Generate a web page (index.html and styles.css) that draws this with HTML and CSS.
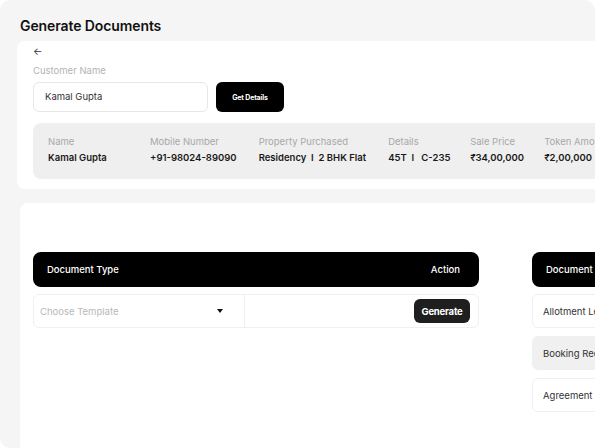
FILE: index.html
```html
<!DOCTYPE html>
<html>
<head>
<meta charset="utf-8">
<link rel="stylesheet" href="styles.css">
</head>
<body>
<div class="panel">
  <h1 class="title">Generate Documents</h1>
  <section class="card card-top">
    <div class="back">&larr;</div>
    <div class="label">Customer Name</div>
    <div class="search-row">
      <div class="input">Kamal Gupta</div>
      <button class="btn-details">Get Details</button>
    </div>
    <div class="info">
      <div class="col col-name"><span class="k">Name</span><span class="v">Kamal Gupta</span></div>
      <div class="col"><span class="k">Mobile Number</span><span class="v">+91-98024-89090</span></div>
      <div class="col"><span class="k">Property Purchased</span><span class="v">Residency &nbsp;I&nbsp; 2 BHK Flat</span></div>
      <div class="col col-details"><span class="k">Details</span><span class="v">45T &nbsp;I&nbsp;&nbsp; C-235</span></div>
      <div class="col col-sale"><span class="k">Sale Price</span><span class="v">₹34,00,000</span></div>
      <div class="col"><span class="k">Token Amount</span><span class="v">₹2,00,000</span></div>
    </div>
  </section>
  <section class="card card-bottom">
    <div class="tables">
      <div class="table t1">
        <div class="thead"><span>Document Type</span><span>Action</span></div>
        <div class="row row-split">
          <div class="cell-select"><span class="ph">Choose Template</span><span class="caret"></span></div>
          <div class="cell-action"><button class="btn-gen">Generate</button></div>
        </div>
      </div>
      <div class="table t2">
        <div class="thead"><span>Document Name</span><span>Action</span></div>
        <div class="row">Allotment Letter</div>
        <div class="row row-gray">Booking Receipt</div>
        <div class="row">Agreement to Sale</div>
      </div>
    </div>
  </section>
</div>
</body>
</html>
```
FILE: styles.css
```css
* { box-sizing: border-box; }
html, body { margin: 0; padding: 0; background: #fff; }
body {
  width: 595px;
  height: 448px;
  overflow: hidden;
  font-family: Inter, "Noto Sans", sans-serif;
  color: #1a1a1a;
}
.panel {
  width: 595px;
  height: 448px;
  background: #f5f5f5;
  border-radius: 11px;
  overflow: hidden;
  padding: 17px 0 0 17px;
}
.title {
  margin: 0 0 0 3px;
  font-size: 14px;
  font-weight: 600;
  line-height: 18px;
  color: #111;
  letter-spacing: -0.1px;
}
.card {
  background: #fff;
  border-radius: 8px;
  width: 640px;
}
.card-top {
  margin-top: 6px;
  height: 148px;
  padding: 3px 0 0 16px;
}
.back {
  font-size: 10px;
  line-height: 14px;
  color: #333;
}
.label {
  margin-top: 6px;
  font-size: 9.5px;
  line-height: 13px;
  color: #b3b3b3;
}
.search-row {
  display: flex;
  gap: 8px;
  margin-top: 5px;
}
.input {
  width: 175px;
  height: 30px;
  border: 1px solid #e6e6e6;
  border-radius: 6px;
  padding: 0 11px;
  font-size: 9.5px;
  line-height: 28px;
  color: #333;
}
.btn-details {
  width: 68px;
  height: 30px;
  background: #000;
  color: #fff;
  border: none;
  border-radius: 6px;
  font-family: inherit;
  font-size: 7px;
  font-weight: 700;
  letter-spacing: -0.15px;
  padding: 0;
}
.info {
  margin-top: 11px;
  height: 56px;
  background: #efefef;
  border-radius: 8px;
  display: flex;
  gap: 22px;
  padding: 12px 0 0 15px;
}
.col {
  display: flex;
  flex-direction: column;
  gap: 3px;
  white-space: nowrap;
  flex-shrink: 0;
}
.col-name { width: 80px; }
.col-details { width: 60px; }
.col-sale { width: 52px; }
.k {
  font-size: 9.5px;
  line-height: 13px;
  color: #a8a8a8;
}
.v {
  font-size: 9.5px;
  line-height: 13px;
  font-weight: 600;
  color: #1a1a1a;
}
.card-bottom {
  margin: 14px 0 0 3px;
  height: 260px;
  padding: 49px 0 0 13px;
}
.tables {
  display: flex;
  gap: 53px;
}
.table {
  width: 446px;
  flex-shrink: 0;
  display: flex;
  flex-direction: column;
  gap: 8px;
}
.thead {
  height: 35px;
  margin-bottom: -1px;
  background: #000;
  border-radius: 8px;
  color: #fff;
  display: flex;
  align-items: center;
  justify-content: space-between;
  padding: 0 19px 0 14px;
  font-size: 9.5px;
  font-weight: 500;
}
.row {
  height: 34px;
  border: 1px solid #efefef;
  border-radius: 6px;
  display: flex;
  align-items: center;
  padding: 0 10px;
  font-size: 9.5px;
  color: #333;
}
.row-gray {
  background: #f0f0f0;
  border-color: #f0f0f0;
}
.row-split {
  padding: 0;
}
.cell-select {
  width: 211px;
  height: 100%;
  border-right: 1px solid #efefef;
  display: flex;
  align-items: center;
  justify-content: space-between;
  padding: 0 21px 0 6px;
}
.ph {
  color: #b8b8b8;
  font-size: 9.5px;
}
.caret {
  width: 0;
  height: 0;
  border-left: 3.5px solid transparent;
  border-right: 3.5px solid transparent;
  border-top: 4px solid #111;
}
.cell-action {
  flex: 1;
  height: 100%;
  display: flex;
  align-items: center;
  justify-content: flex-end;
  padding-right: 8px;
}
.btn-gen {
  width: 56px;
  height: 24px;
  background: #1f1f1f;
  color: #fff;
  border: none;
  border-radius: 6px;
  font-family: inherit;
  font-size: 9.5px;
  font-weight: 700;
  letter-spacing: -0.2px;
  padding: 0;
}
```
